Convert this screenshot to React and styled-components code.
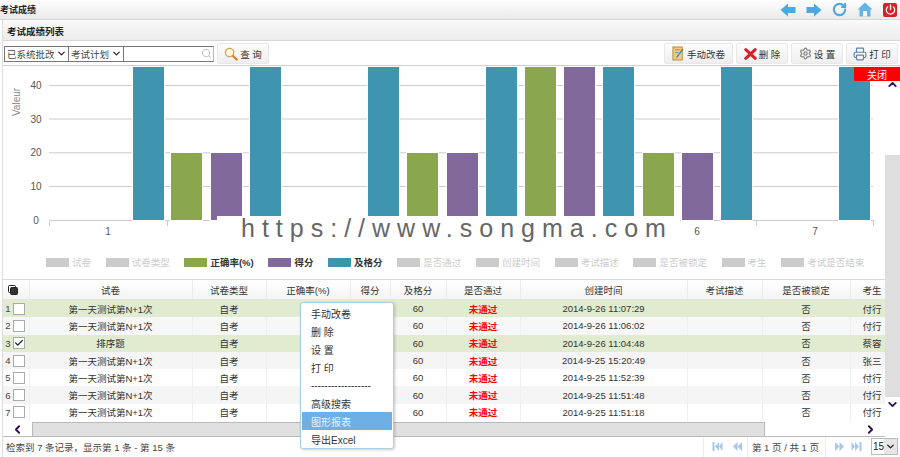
import React from 'react';
import styled, { createGlobalStyle } from 'styled-components';
import { ChevronDown, ChevronUp, ChevronLeft, ChevronRight, Power, RotateCw, Settings, Printer, Search, Check } from 'lucide-react';

const GlobalStyle = createGlobalStyle`
  html, body { margin: 0; padding: 0; background: #fff; }
  body {
    font-family: "Liberation Sans", "Noto Sans CJK SC", sans-serif;
    font-size: 9.5px;
    color: #333;
  }
`;

const Page = styled.div`
  width: 900px;
  height: 457px;
  display: flex;
  flex-direction: column;
  overflow: hidden;
  position: relative;
`;

const TopBar = styled.div`
  height: 20px;
  flex: none;
  display: flex;
  align-items: center;
  justify-content: space-between;
  background: linear-gradient(#fff, #e9e9e9);
  border-bottom: 1px solid #d8d8d8;
  box-sizing: border-box;
`;

const PageTitle = styled.div`
  font-size: 9px;
  font-weight: 700;
  color: #222;
`;

const TopIcons = styled.div`
  display: flex;
  align-items: center;
  gap: 10px;
  padding-right: 3px;
`;

const Panel = styled.div`
  flex: 1;
  min-height: 0;
  display: flex;
  flex-direction: column;
  margin-left: 2px;
  border-left: 1px solid #ddd;
`;

const TitleBar = styled.div`
  height: 21px;
  flex: none;
  box-sizing: border-box;
  padding: 1px 0 0 4px;
  display: flex;
  align-items: center;
  font-size: 9.5px;
  font-weight: 700;
  color: #222;
  background: linear-gradient(#fafafa, #ececec);
  border-bottom: 1px solid #d6d6d6;
`;

const Toolbar = styled.div`
  height: 25px;
  flex: none;
  box-sizing: border-box;
  display: flex;
  align-items: center;
  justify-content: space-between;
  padding: 1px 2px 0 1px;
  border-bottom: 1px solid #cfcfcf;
`;

const ToolGroup = styled.div`
  display: flex;
  align-items: center;
  gap: ${({ $gap }) => $gap || 3}px;
`;

const SearchBox = styled.div`
  display: flex;
  height: 16px;
  border: 1px solid #777;
  border-right-color: #bbb;
  box-sizing: border-box;
  margin-right: 1px;
`;

const SelectField = styled.div`
  width: ${({ $w }) => $w}px;
  box-sizing: border-box;
  display: flex;
  align-items: center;
  justify-content: space-between;
  padding: 0 1px 0 2px;
  border-right: 1px solid #777;
  font-size: 9.5px;
  color: #444;
  white-space: nowrap;
`;

const SearchInput = styled.div`
  width: 89px;
  display: flex;
  align-items: center;
  justify-content: flex-end;
  padding-right: 1px;
  box-sizing: border-box;
  color: #bbb;
`;

const ToolButton = styled.button`
  height: 21px;
  width: ${({ $w }) => $w}px;
  padding: 0;
  display: flex;
  align-items: center;
  justify-content: center;
  gap: 2px;
  font: inherit;
  font-size: 9.5px;
  color: #333;
  background: linear-gradient(#fdfdfd, #eeeeee);
  border: 1px solid #e8e8e8;
  border-radius: 2px;
`;

const ScrollArea = styled.div`
  flex: 1;
  min-height: 0;
  display: flex;
  position: relative;
`;

const ScrollContent = styled.div`
  flex: 1;
  min-width: 0;
  display: flex;
  flex-direction: column;
`;

const ChartWrap = styled.div`
  height: 213px;
  flex: none;
  display: flex;
  flex-direction: column;
`;

const ChartSvg = styled.svg`
  display: block;
  flex: none;
  font-family: "Liberation Sans", sans-serif;
`;

const Legend = styled.div`
  display: flex;
  align-items: center;
  gap: 14.7px;
  padding: 9px 0 0 43px;
`;

const LegendItem = styled.div`
  display: flex;
  align-items: center;
  gap: 3px;
  font-size: 9.5px;
  white-space: nowrap;
  color: ${({ $color }) => ($color ? '#333' : '#ccc')};
  font-weight: ${({ $color }) => ($color ? 700 : 400)};
`;

const Swatch = styled.span`
  width: 23px;
  height: 9px;
  background: ${({ $color }) => $color || '#ccc'};
`;

const Watermark = styled.div`
  position: absolute;
  left: 214px;
  top: 150px;
  width: 463px;
  height: 30px;
  box-sizing: border-box;
  padding-left: 24px;
  background: #fff;
  font-family: "Liberation Sans", sans-serif;
  font-size: 25px;
  line-height: 24px;
  letter-spacing: 7px;
  color: #666;
  white-space: nowrap;
`;

const CloseTab = styled.div`
  position: absolute;
  right: 0;
  top: 1px;
  width: 46px;
  height: 14px;
  display: flex;
  align-items: center;
  justify-content: center;
  background: #f00;
  color: #fff;
  font-size: 10px;
`;

const TableWrap = styled.div`
  height: 143px;
  flex: none;
  overflow: hidden;
  border-top: 1px solid #d8d8d8;
  box-sizing: border-box;
`;

const GridTable = styled.table`
  width: 891px;
  table-layout: fixed;
  border-collapse: collapse;
`;

const HeadCell = styled.th`
  height: 19px;
  padding: 0;
  font-size: 9.5px;
  font-weight: 400;
  color: #333;
  text-align: center;
  white-space: nowrap;
  background: linear-gradient(#fff, #f4f4f4);
  border-right: 1px solid #ececec;
  border-bottom: 1px solid #e4e4e4;
`;

const Row = styled.tr`
  background: ${({ $bg }) => $bg};
`;

const Cell = styled.td`
  height: 17.3px;
  padding: 0;
  font-size: 9.5px;
  text-align: center;
  white-space: nowrap;
  color: ${({ $red }) => ($red ? '#f00' : '#333')};
  font-weight: ${({ $red }) => ($red ? 700 : 400)};
  border-right: 1px solid ${({ $sel }) => ($sel ? '#e0ebcf' : '#efefef')};
`;

const RowHead = styled.div`
  display: flex;
  align-items: center;
  justify-content: flex-end;
  gap: 2px;
  padding-right: 4px;
  color: #444;
`;

const Box = styled.span`
  width: 10px;
  height: 10px;
  display: flex;
  align-items: center;
  justify-content: center;
  background: #fff;
  border: 1px solid #aaa;
  color: #222;
`;

const HScroll = styled.div`
  height: 14px;
  flex: none;
  display: flex;
  align-items: stretch;
  border-bottom: 1px solid #bbb;
`;

const ArrowCell = styled.div`
  width: ${({ $w }) => $w}px;
  flex: none;
  display: flex;
  align-items: center;
  justify-content: ${({ $end }) => ($end ? 'flex-end' : 'center')};
  padding-right: ${({ $end }) => ($end ? 8 : 0)}px;
  box-sizing: border-box;
  color: #2c0f52;
`;

const HThumb = styled.div`
  flex: 1;
  background: #e0e0e0;
  border: 1px solid #b9b9b9;
  border-width: 1px 1px 0 1px;
`;

const VScroll = styled.div`
  width: 15px;
  flex: none;
  display: flex;
  flex-direction: column;
  align-items: center;
  color: #2c0f52;
  padding-top: 12px;
  box-sizing: border-box;
`;

const VThumb = styled.div`
  width: 15px;
  height: 242px;
  margin: 64px 0 1px;
  flex: none;
  background: #dedede;
`;

const Footer = styled.div`
  height: 21px;
  flex: none;
  display: flex;
  align-items: center;
  justify-content: space-between;
  box-sizing: border-box;
  padding: 0 2px 0 3px;
  color: #444;
  font-size: 9.5px;
`;

const Pager = styled.div`
  display: flex;
  align-items: center;
  height: 100%;
`;

const PagerGroup = styled.div`
  display: flex;
  align-items: center;
  gap: ${({ $gap }) => $gap || 0}px;
  height: 100%;
  padding: 0 ${({ $r }) => $r}px 0 ${({ $l }) => $l}px;
  border-left: 1px solid #ececec;
  white-space: nowrap;
`;

const PageSize = styled.div`
  width: 27px;
  height: 17px;
  margin-left: 9px;
  box-sizing: border-box;
  border: 1px solid #bbb;
  display: flex;
  align-items: center;
  justify-content: space-between;
  padding-left: 1px;
  font-size: 10px;
  color: #222;
`;

const SizeArrow = styled.span`
  width: 13px;
  height: 100%;
  display: flex;
  align-items: center;
  justify-content: center;
  background: #e6e6e6;
  color: #222;
`;

const ContextMenu = styled.div`
  position: absolute;
  left: 300px;
  top: 302px;
  width: 94px;
  height: 147px;
  box-sizing: border-box;
  padding: 1px;
  background: #fff;
  border: 1px solid #a8d0e6;
  border-radius: 3px;
  box-shadow: 1px 1px 3px rgba(0, 0, 0, 0.2);
`;

const MenuItem = styled.div`
  height: 18px;
  display: flex;
  align-items: center;
  padding-left: 9px;
  font-size: 10px;
  color: ${({ $active }) => ($active ? '#e8f3ff' : '#333')};
  background: ${({ $active }) => ($active ? '#6cb0e6' : 'transparent')};
  white-space: nowrap;
  overflow: hidden;
`;

const COLS = [26, 163, 74, 84, 40, 56, 74, 167, 75, 88, 44];
const HEADS = ['试卷', '试卷类型', '正确率(%)', '得分', '及格分', '是否通过', '创建时间', '考试描述', '是否被锁定', '考生'];

const ROWS = [
  { name: '第一天测试第N+1次', time: '2014-9-26 11:07:29', user: '付行', bg: '#e0ebcf' },
  { name: '第一天测试第N+1次', time: '2014-9-26 11:06:02', user: '付行', bg: '#f7f7f7' },
  { name: '排序题', time: '2014-9-26 11:04:48', user: '蔡容', bg: '#e0ebcf', checked: true },
  { name: '第一天测试第N+1次', time: '2014-9-25 15:20:49', user: '张三', bg: '#f5f5f5' },
  { name: '第一天测试第N+1次', time: '2014-9-25 11:52:39', user: '付行', bg: '#fff' },
  { name: '第一天测试第N+1次', time: '2014-9-25 11:51:48', user: '付行', bg: '#f5f5f5' },
  { name: '第一天测试第N+1次', time: '2014-9-25 11:51:18', user: '付行', bg: '#fff' },
];

const TEAL = '#3f95b0';
const GREEN = '#8aa64f';
const PURPLE = '#81699b';

// x, colour, top of the bar (chart coordinates)
const BARS = [
  [133, TEAL, 1], [171, GREEN, 87], [211, PURPLE, 87], [250, TEAL, 1],
  [368, TEAL, 1], [407, GREEN, 87], [447, PURPLE, 87], [486, TEAL, 1],
  [525, GREEN, 1], [564, PURPLE, 1], [603, TEAL, 1], [643, GREEN, 87],
  [682, PURPLE, 87], [721, TEAL, 1], [839, TEAL, 1],
];

const GRID = [
  [19, '40'], [52.5, '30'], [86.3, '20'], [120, '10'], [154, '0'],
];

const TICKS = [49, 167, 285, 403, 520, 638, 756, 873];

const LEGEND = [
  ['试卷'], ['试卷类型'], ['正确率(%)', GREEN], ['得分', PURPLE], ['及格分', TEAL], ['是否通过'],
  ['创建时间'], ['考试描述'], ['是否被锁定'], ['考生'], ['考试是否结束'],
];

const MENU = ['手动改卷', '删 除', '设 置', '打 印', '------------------', '高级搜索', '图形报表', '导出Excel'];

const ArrowLeftIcon = ({ flip }) => (
  <svg width="16" height="14" viewBox="0 0 16 14" style={flip ? { transform: 'scaleX(-1)' } : undefined}>
    <path d="M0.5 7 L8 0.5 V4 H15.5 V10 H8 V13.5 Z" fill="#4ea6e2" />
  </svg>
);

const HomeIcon = () => (
  <svg width="16" height="15" viewBox="0 0 16 15">
    <path d="M8 0.5 L15.5 7.5 H13.5 V14.5 H2.5 V7.5 H0.5 Z" fill="#63b5e6" />
    <rect x="6" y="9" width="4" height="5.5" fill="#f2f8fc" />
  </svg>
);

const PowerBadge = styled.span`
  width: 14px;
  height: 14px;
  display: flex;
  align-items: center;
  justify-content: center;
  border-radius: 2px;
  background: #d2232a;
  color: #fff;
`;

const LensIcon = () => (
  <svg width="14" height="14" viewBox="0 0 15 15">
    <circle cx="6" cy="6" r="4.5" fill="#fff8e6" stroke="#d8a34c" strokeWidth="1.4" />
    <path d="M9.5 9.5 L13.5 13.5" stroke="#e07b1f" strokeWidth="2.2" strokeLinecap="round" />
  </svg>
);

const EditIcon = () => (
  <svg width="13" height="15" viewBox="0 0 14 16">
    <rect x="1" y="1" width="10" height="14" fill="#f3cf7d" stroke="#b9822d" />
    <path d="M3 4 H9 M3 7 H7" stroke="#5f8fc4" />
    <path d="M12.5 3.5 L6 12 L4.5 13.5 L5 11 L11 3 Z" fill="#3f83c6" />
  </svg>
);

const CrossIcon = () => (
  <svg width="13" height="12" viewBox="0 0 15 14">
    <path d="M2 2 L13 12 M13 2 L2 12" stroke="#dc2029" strokeWidth="3.6" strokeLinecap="round" />
  </svg>
);

const CopyIcon = () => (
  <svg width="10" height="10" viewBox="0 0 10 10" style={{ display: 'block', margin: '0 0 0 5px' }}>
    <rect x="0.5" y="0.5" width="7" height="7" rx="1" fill="#fff" stroke="#222" />
    <rect x="2.5" y="2.5" width="7" height="7" rx="1" fill="#333" stroke="#222" />
  </svg>
);

const PageIcon = ({ dir, bar }) => (
  <svg width="11" height="11" viewBox="0 0 11 11" style={dir === 'right' ? { transform: 'scaleX(-1)' } : undefined}>
    {bar && <rect x="0.5" y="1" width="2" height="9" fill="#a7c8ea" />}
    <path d={bar ? 'M3 5.5 L7 1 V10 Z M7 5.5 L10.5 1 V10 Z' : 'M1 5.5 L5.5 1 V10 Z M5.5 5.5 L10 1 V10 Z'} fill="#a7c8ea" />
  </svg>
);

const Chart = () => (
  <ChartSvg width="883" height="180" viewBox="3 0 883 180">
    <text transform="translate(20 36) rotate(-90)" textAnchor="middle" fontSize="10" fill="#888">Valeur</text>
    {GRID.map(([y, label]) => (
      <g key={label}>
        <line x1="49" x2="873" y1={y + 0.5} y2={y + 0.5} stroke="#ccc" />
        <text x="36" y={y + 4} textAnchor="middle" fontSize="10" fill="#555">{label}</text>
      </g>
    ))}
    {TICKS.map((x) => (
      <line key={x} x1={x + 0.5} x2={x + 0.5} y1="154" y2="160" stroke="#ccc" />
    ))}
    {BARS.map(([x, color, top]) => (
      <rect key={x} x={x} y={top} width="31" height={154 - top} fill={color} stroke="#fff" strokeWidth="2" paintOrder="stroke" />
    ))}
    <text x="108" y="169" textAnchor="middle" fontSize="10" fill="#555">1</text>
    <text x="697" y="169" textAnchor="middle" fontSize="10" fill="#555">6</text>
    <text x="815" y="169" textAnchor="middle" fontSize="10" fill="#555">7</text>
  </ChartSvg>
);

export default function App() {
  return (
    <Page>
      <GlobalStyle />
      <TopBar>
        <PageTitle>考试成绩</PageTitle>
        <TopIcons>
          <ArrowLeftIcon />
          <ArrowLeftIcon flip />
          <RotateCw size={15} color="#4ea6e2" strokeWidth={3.4} />
          <HomeIcon />
          <PowerBadge><Power size={11} strokeWidth={3} /></PowerBadge>
        </TopIcons>
      </TopBar>
      <Panel>
        <TitleBar>考试成绩列表</TitleBar>
        <Toolbar>
          <ToolGroup $gap={2}>
            <SearchBox>
              <SelectField $w={64}>已系统批改<ChevronDown size={11} strokeWidth={2.6} color="#222" /></SelectField>
              <SelectField $w={55}>考试计划<ChevronDown size={11} strokeWidth={2.6} color="#222" /></SelectField>
              <SearchInput><Search size={11} /></SearchInput>
            </SearchBox>
            <ToolButton $w={52}><LensIcon />查 询</ToolButton>
          </ToolGroup>
          <ToolGroup>
            <ToolButton $w={69}><EditIcon />手动改卷</ToolButton>
            <ToolButton $w={52}><CrossIcon />删 除</ToolButton>
            <ToolButton $w={52}><Settings size={13} color="#888" strokeWidth={2.4} />设 置</ToolButton>
            <ToolButton $w={52}><Printer size={14} color="#5f84ad" />打 印</ToolButton>
          </ToolGroup>
        </Toolbar>
        <ScrollArea>
          <ScrollContent>
            <ChartWrap>
              <Chart />
              <Legend>
                {LEGEND.map(([label, color]) => (
                  <LegendItem key={label} $color={color}>
                    <Swatch $color={color} />
                    {label}
                  </LegendItem>
                ))}
              </Legend>
            </ChartWrap>
            <TableWrap>
              <GridTable>
                <colgroup>
                  {COLS.map((w, i) => <col key={i} style={{ width: w }} />)}
                </colgroup>
                <thead>
                  <tr>
                    <HeadCell><CopyIcon /></HeadCell>
                    {HEADS.map((h) => <HeadCell key={h}>{h}</HeadCell>)}
                  </tr>
                </thead>
                <tbody>
                  {ROWS.map((r, i) => {
                    const sel = r.bg === '#e0ebcf';
                    return (
                      <Row key={i} $bg={r.bg}>
                        <Cell $sel={sel}>
                          <RowHead>
                            {i + 1}
                            <Box>{r.checked && <Check size={10} strokeWidth={3} />}</Box>
                          </RowHead>
                        </Cell>
                        <Cell $sel={sel}>{r.name}</Cell>
                        <Cell $sel={sel}>自考</Cell>
                        <Cell $sel={sel} />
                        <Cell $sel={sel} />
                        <Cell $sel={sel}>60</Cell>
                        <Cell $sel={sel} $red>未通过</Cell>
                        <Cell $sel={sel}>{r.time}</Cell>
                        <Cell $sel={sel} />
                        <Cell $sel={sel}>否</Cell>
                        <Cell $sel={sel}>{r.user}</Cell>
                      </Row>
                    );
                  })}
                </tbody>
              </GridTable>
            </TableWrap>
            <HScroll>
              <ArrowCell $w={29}><ChevronLeft size={13} strokeWidth={3.4} /></ArrowCell>
              <HThumb />
              <ArrowCell $w={120} $end><ChevronRight size={13} strokeWidth={3.4} /></ArrowCell>
            </HScroll>
            <Watermark>https://www.songma.com</Watermark>
            <CloseTab>关闭</CloseTab>
          </ScrollContent>
          <VScroll>
            <ChevronUp size={13} strokeWidth={3.4} />
            <VThumb />
            <ChevronDown size={13} strokeWidth={3.4} />
          </VScroll>
        </ScrollArea>
        <Footer>
          <span>检索到 7 条记录，显示第 1 条 - 第 15 条</span>
          <Pager>
            <PagerGroup $l={8} $r={4} $gap={9}>
              <PageIcon bar />
              <PageIcon />
            </PagerGroup>
            <PagerGroup $l={4} $r={6}>第 1 页 / 共 1 页</PagerGroup>
            <PagerGroup $l={8} $r={0} $gap={6}>
              <PageIcon dir="right" />
              <PageIcon dir="right" bar />
            </PagerGroup>
            <PageSize>
              15
              <SizeArrow><ChevronDown size={11} strokeWidth={3} /></SizeArrow>
            </PageSize>
          </Pager>
        </Footer>
      </Panel>
      <ContextMenu>
        {MENU.map((m) => (
          <MenuItem key={m} $active={m === '图形报表'}>{m}</MenuItem>
        ))}
      </ContextMenu>
    </Page>
  );
}
